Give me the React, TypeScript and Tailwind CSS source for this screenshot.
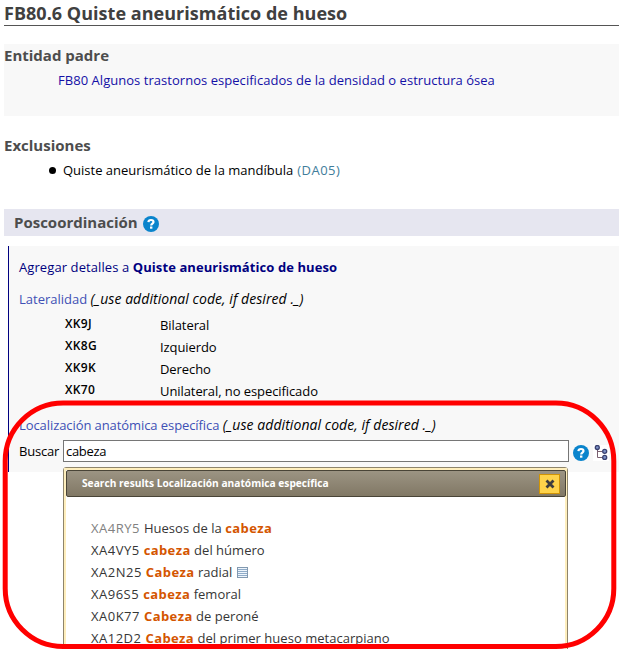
import type { ReactNode } from "react";

function HelpIcon() {
  return (
    <svg className="shrink-0" width="16" height="16" viewBox="0 0 16 16">
      <circle cx="8" cy="8" r="8" fill="#0a84cc" />
      <path d="M5.4 6.1C5.5 4.6 6.6 4 8 4c1.5 0 2.5.7 2.5 2 0 1.7-2.3 1.7-2.3 3.6" fill="none" stroke="#fff" strokeWidth="2.2" />
      <rect x="7" y="10.5" width="2.4" height="2.2" fill="#fff" />
    </svg>
  );
}

function TreeIcon() {
  return (
    <svg className="shrink-0 bg-white" width="16" height="16" viewBox="0 0 16 16">
      <path d="M4.5 4v8.5H10M4.5 6.5H9" fill="none" stroke="#7a6070" strokeWidth="1" />
      <g fill="#7d93c8" stroke="#39406f" strokeWidth="1.3">
        <circle cx="4.3" cy="2.5" r="2" />
        <circle cx="11.7" cy="6.3" r="2" />
        <circle cx="11.7" cy="12.4" r="2" />
      </g>
    </svg>
  );
}

function ListIcon() {
  return (
    <svg className="ml-[5px] shrink-0" width="11" height="11" viewBox="0 0 11 11">
      <rect x=".5" y=".5" width="10" height="10" fill="#eef5fc" stroke="#8299b0" />
      <path d="M1 2.5h9M1 4.5h9M1 6.5h9M1 8.5h9" stroke="#8fabc8" />
    </svg>
  );
}

const laterality = [
  { code: "XK9J", label: "Bilateral" },
  { code: "XK8G", label: "Izquierdo" },
  { code: "XK9K", label: "Derecho" },
  { code: "XK70", label: "Unilateral, no especificado" },
];

function Match({ children }: { children: ReactNode }) {
  return <b className="tracking-[0.4px] text-[#d45500]">{children}</b>;
}

function Hint() {
  return <i className="text-[14px] tracking-[0.06px]">(_use additional code, if desired ._)</i>;
}

const results = [
  { code: "XA4RY5", muted: true, body: <>Huesos de la <Match>cabeza</Match></> },
  { code: "XA4VY5", body: <><Match>cabeza</Match> del húmero</> },
  { code: "XA2N25", list: true, body: <><Match>Cabeza</Match> radial</> },
  { code: "XA96S5", body: <><Match>cabeza</Match> femoral</> },
  { code: "XA0K77", body: <><Match>Cabeza</Match> de peroné</> },
  { code: "XA12D2", body: <><Match>Cabeza</Match> del primer hueso metacarpiano</> },
];

export default function App() {
  return (
    <div className="relative h-[649px] w-[619px] overflow-hidden bg-white pl-1 font-['Open_Sans','Noto_Sans',sans-serif] text-[13px] leading-[22px] whitespace-nowrap text-black">
      <h1 className="h-[26px] border-b border-[#555] text-[18px] leading-[27px] font-bold tracking-[0.03px] text-[#404040]">
        FB80.6 Quiste aneurismático de hueso
      </h1>

      <section className="mt-[18px] h-[72px] bg-[#f8f8f8]">
        <h2 className="h-[24px] text-[15px] leading-[22px] font-bold text-[#4d4d4d]">Entidad padre</h2>
        <p className="pt-[1px] pl-[54px] tracking-[0.04px] text-[#1410a6]">
          FB80 Algunos trastornos especificados de la densidad o estructura ósea
        </p>
      </section>

      <section className="mt-[18px] h-[75px]">
        <h2 className="h-[24px] text-[15px] leading-[22px] font-bold text-[#4d4d4d]">Exclusiones</h2>
        <div className="flex items-center pt-[1px] pl-[45px]">
          <span className="mr-[7px] size-[7px] rounded-full bg-black" />
          Quiste aneurismático de la mandíbula
          <span className="ml-1 tracking-[0.5px] text-[#417d9b]">(DA05)</span>
        </div>
      </section>

      <div className="flex h-[27px] items-center gap-[5px] bg-[#e6e6f0] pl-[10px]">
        <h2 className="text-[15px] leading-[27px] font-bold text-[#4d4d4d]">Poscoordinación</h2>
        <div className="pt-[3px]"><HelpIcon /></div>
      </div>

      <section className="mt-[10px] ml-1 h-[226px] border-l border-[#000080] bg-[#f8f8f8] pt-[10px] pl-[10px]">
        <p className="tracking-[0.09px] text-[#000080]">
          Agregar detalles a <b>Quiste aneurismático de hueso</b>
        </p>
        <p className="mt-[10px] h-[22px]">
          <span className="text-[#4050b5]">Lateralidad</span> <Hint />
        </p>
        <div className="mt-[4px]">
          {laterality.map((item) => (
            <div key={item.code} className="flex h-[22px] pl-[46px]">
              <span className="w-[95px] text-[12px] leading-[20px] font-semibold tracking-[0.35px]">{item.code}</span>
              <span className="tracking-[-0.08px]">{item.label}</span>
            </div>
          ))}
        </div>
        <p className="mt-[12px] h-[22px]">
          <span className="tracking-[-0.08px] text-[#4050b5]">Localización anatómica específica</span>{" "}
          <Hint />
        </p>
        <div className="mt-[4px] flex h-[22px]">
          <span className="w-[44px] tracking-[-0.2px]">Buscar</span>
          <input
            className="h-[22px] w-[506px] border border-[#767676] bg-white px-[2px] tracking-[-0.3px] outline-none"
            defaultValue="cabeza"
          />
          <div className="flex gap-[4px] pt-[5px] pl-1">
            <HelpIcon />
            <TreeIcon />
          </div>
        </div>
      </section>

      <section className="relative -mt-[5px] ml-[59px] h-[200px] w-[505px] rounded-[3px] border border-[#8e846b] bg-white">
        <div className="h-full border-2 border-[#feeebd]">
          <header className="-mr-px flex h-[27px] items-center justify-between rounded-[2px] border border-[#494437] bg-linear-to-b from-[#9c9483] to-[#817865] pr-[5px] pl-[15px]">
            <span className="-mt-px text-[10.2px] font-bold text-white">Search results Localización anatómica específica</span>
            <button className="flex h-[20px] w-[21px] items-center justify-center border border-[#d19405] bg-[#fed34a]">
              <svg width="10" height="10" viewBox="0 0 10 10">
                <path d="M1.5 1.5l7 7M8.5 1.5l-7 7" stroke="#3d3d3d" strokeWidth="2.8" />
              </svg>
            </button>
          </header>
          <ul className="pt-[20px] pl-[25px] text-[#363636]">
            {results.map((result) => (
              <li key={result.code} className="flex h-[22px] items-center">
                <span className={result.muted ? "mr-1 tracking-[0.5px] text-[#818181]" : "mr-1 tracking-[0.5px]"}>
                  {result.code}
                </span>
                <span className="tracking-[0.03px]">{result.body}</span>
                {result.list && <ListIcon />}
              </li>
            ))}
          </ul>
        </div>
      </section>

      <svg className="pointer-events-none absolute top-0 left-0" width="619" height="649" viewBox="0 0 619 649">
        <rect x="5.2" y="403" width="608.6" height="243.5" rx="58" fill="none" stroke="#f00" strokeWidth="5" />
      </svg>
    </div>
  );
}
